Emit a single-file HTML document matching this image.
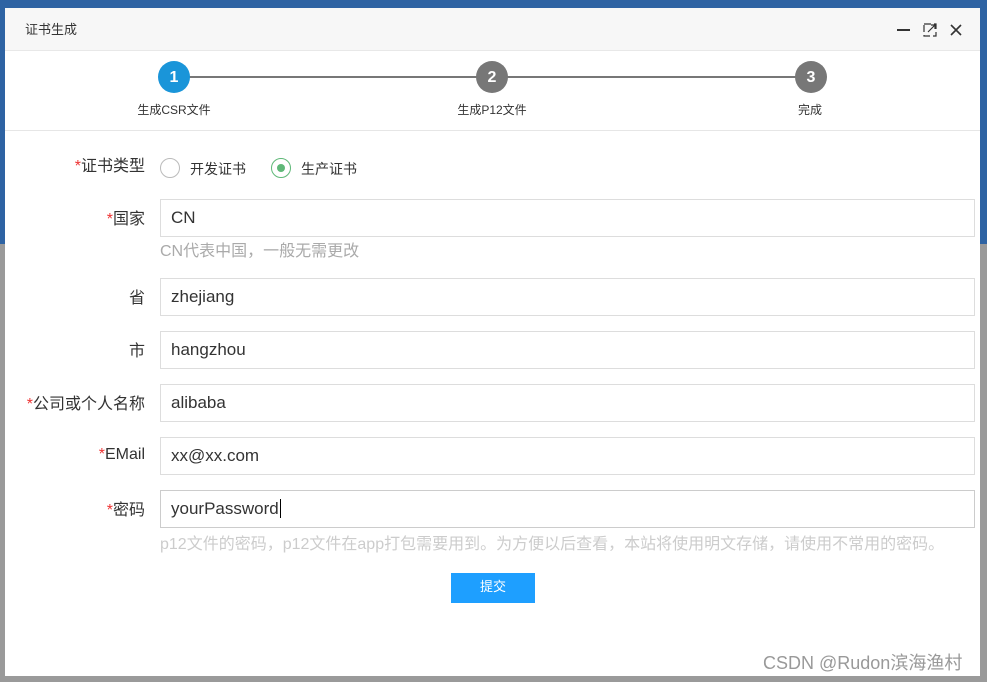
<!DOCTYPE html>
<html><head><meta charset="utf-8"><style>
*{box-sizing:border-box;margin:0;padding:0}
body{width:987px;height:682px;overflow:hidden;position:relative;background:#9a9a9a;font-family:"Liberation Sans","Noto Sans CJK SC",sans-serif}
.bgtop{position:absolute;left:0;top:0;width:987px;height:244px;background:#2e63a3}
.dlg{position:absolute;left:5px;top:8px;width:975px;height:668px;background:#fff}
.hd{height:43px;background:#f7f7f7;border-bottom:1px solid #e8e8e8;font-size:13px;color:#333;padding:11px 0 0 20px}
.abs{position:absolute}
.circ{position:absolute;width:32px;height:32px;border-radius:50%;color:#fff;font-weight:bold;font-size:16px;text-align:center;line-height:34px}
.sl{position:absolute;font-size:12px;color:#333;transform:translateX(-50%);top:93px}
.lbl{position:absolute;right:835px;font-size:16px;color:#333;text-align:right;white-space:nowrap}
.lbl b{color:#e33;font-weight:normal}
.inp{position:absolute;left:155px;width:815px;height:38px;border:1px solid #ddd;font-size:17px;color:#333;padding:8px 0 0 10px}
.hint{position:absolute;left:155px;font-size:16px;color:#aaa;white-space:nowrap}
</style></head><body>
<div class="bgtop"></div>
<div class="dlg">
<div class="hd">证书生成</div>
<svg class="abs" style="left:890px;top:14px" width="70" height="16">
<line x1="2" y1="8" x2="15" y2="8" stroke="#333" stroke-width="2"/>
<rect x="29" y="2" width="12" height="12" fill="none" stroke="#333" stroke-width="1.2" stroke-dasharray="7 3"/>
<path d="M33 10 L40 3 M36 3 H40 V7" stroke="#333" stroke-width="1.2" fill="none"/>
<path d="M56 3 L66 13 M66 3 L56 13" stroke="#333" stroke-width="1.6"/>
</svg>
<div class="abs" style="left:170px;top:68px;width:635px;height:2px;background:#777"></div>
<div class="circ" style="left:153px;top:53px;background:#1a95d9">1</div>
<div class="circ" style="left:471px;top:53px;background:#777">2</div>
<div class="circ" style="left:790px;top:53px;background:#777">3</div>
<div class="sl" style="left:169px">生成CSR文件</div>
<div class="sl" style="left:487px">生成P12文件</div>
<div class="sl" style="left:805px">完成</div>
<div class="abs" style="left:0;top:122px;width:975px;height:1px;background:#e6e6e6"></div>
<div class="lbl" style="top:144px"><b>*</b>证书类型</div>
<div class="abs" style="left:155px;top:150px;width:20px;height:20px;border:1.5px solid #bbb;border-radius:50%"></div>
<div class="abs" style="left:185px;top:151px;font-size:14px;color:#333">开发证书</div>
<div class="abs" style="left:266px;top:150px;width:20px;height:20px;border:1.5px solid #5fb878;border-radius:50%"></div>
<div class="abs" style="left:272px;top:156px;width:8px;height:8px;background:#5fb878;border-radius:50%"></div>
<div class="abs" style="left:296px;top:151px;font-size:14px;color:#333">生产证书</div>
<div class="lbl" style="top:197px"><b>*</b>国家</div>
<div class="inp" style="top:191px">CN</div>
<div class="hint" style="top:229px">CN代表中国，一般无需更改</div>
<div class="lbl" style="top:276px">省</div>
<div class="inp" style="top:270px">zhejiang</div>
<div class="lbl" style="top:329px">市</div>
<div class="inp" style="top:323px">hangzhou</div>
<div class="lbl" style="top:382px"><b>*</b>公司或个人名称</div>
<div class="inp" style="top:376px">alibaba</div>
<div class="lbl" style="top:438px"><b>*</b>EMail</div>
<div class="inp" style="top:429px">xx@xx.com</div>
<div class="lbl" style="top:488px"><b>*</b>密码</div>
<div class="inp" style="top:482px;border-color:#ccc">yourPassword<span style="border-left:1px solid #000;margin-left:1px"></span></div>
<div class="hint" style="top:522px;color:#ccc">p12文件的密码，p12文件在app打包需要用到。为方便以后查看，本站将使用明文存储，请使用不常用的密码。</div>
<div class="abs" style="left:446px;top:565px;width:84px;height:30px;background:#1e9fff;color:#fff;font-size:13px;text-align:center;line-height:28px">提交</div>
<div class="abs" style="left:758px;top:641px;font-size:18px;color:#999;white-space:nowrap">CSDN @Rudon滨海渔村</div>
</div>
</body></html>
